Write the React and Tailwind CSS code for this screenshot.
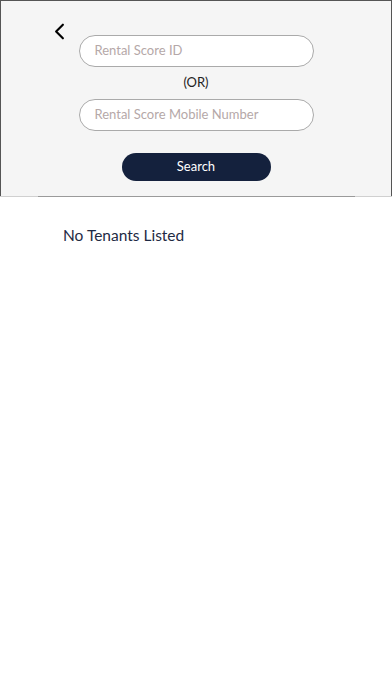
import { ChevronLeft } from 'lucide-react'

export default function App() {
  return (
    <div className="w-[392px] h-[696px] bg-white" style={{ fontFamily: 'Lato, "Open Sans", sans-serif' }}>
      {/* Search panel */}
      <div className="relative h-[197px] bg-[#f5f5f5] border-t border-x border-[#555555]">
        <button className="absolute left-[45px] top-[17px] text-black">
          <ChevronLeft size={27} strokeWidth={1.9} />
        </button>
        <div className="flex flex-col items-center pt-[34px]">
          <div className="w-[235px] h-[32px] rounded-full border border-[#aaaaaa] bg-white flex items-center px-[15px]">
            <span className="text-[13px] text-[#b5a8a8]">Rental Score ID</span>
          </div>
          <div className="mt-[9px] text-[13px] text-[#222222] leading-none">(OR)</div>
          <div className="mt-[10px] w-[235px] h-[32px] rounded-full border border-[#aaaaaa] bg-white flex items-center px-[15px]">
            <span className="text-[13px] text-[#b5a8a8]">Rental Score Mobile Number</span>
          </div>
          <button className="mt-[22px] w-[149px] h-[28px] rounded-full bg-[#14213d] text-white text-[13px]">
            Search
          </button>
        </div>
        <div className="absolute left-[-1px] right-[-1px] bottom-0 h-px bg-[#d0d0d0]">
          <div className="ml-[38px] mr-[37px] h-px bg-[#9a9a9a]" />
        </div>
      </div>

      <div className="pl-[63px] pt-[27px] text-[15.5px] text-[#1e2a44]">No Tenants Listed</div>
    </div>
  )
}
